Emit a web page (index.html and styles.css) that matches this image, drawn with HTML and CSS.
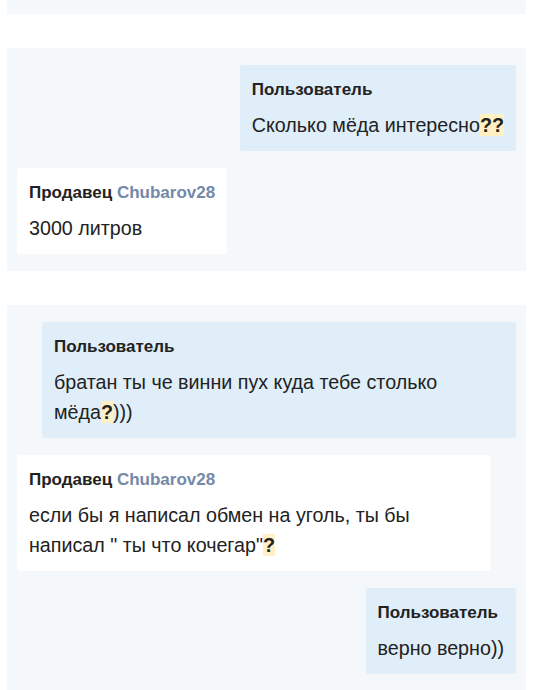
FILE: index.html
```html
<!DOCTYPE html>
<html lang="ru">
<head>
    <meta charset="UTF-8">
    <meta name="viewport" content="width=device-width, initial-scale=1.0">
    <title>Переписка</title>
    <link rel="stylesheet" href="styles.css">
</head>
<body>
    <div class="dialog dialog-cut"></div>

    <div class="dialog">
        <div class="msg msg-user">
            <div class="msg-head">Пользователь</div>
            <div class="msg-text">Сколько мёда интересно<b class="mark">??</b></div>
        </div>
        <div class="msg msg-seller">
            <div class="msg-head">Продавец <span class="nick">Chubarov28</span></div>
            <div class="msg-text">3000 литров</div>
        </div>
    </div>

    <div class="dialog">
        <div class="msg msg-user">
            <div class="msg-head">Пользователь</div>
            <div class="msg-text">братан ты че винни пух куда тебе столько мёда<b class="mark">?</b>)))</div>
        </div>
        <div class="msg msg-seller">
            <div class="msg-head">Продавец <span class="nick">Chubarov28</span></div>
            <div class="msg-text">если бы я написал обмен на уголь, ты бы написал " ты что кочегар"<b class="mark">?</b></div>
        </div>
        <div class="msg msg-user">
            <div class="msg-head">Пользователь</div>
            <div class="msg-text">верно верно))</div>
        </div>
    </div>
</body>
</html>
```

FILE: styles.css
```css
html,
body {
    margin: 0;
    padding: 0;
}
body {
    background-color: #fff;
    font-family: "Liberation Sans", Arial, sans-serif;
    color: #222;
}
.dialog {
    width: 519px;
    box-sizing: border-box;
    margin: 0 0 34px 7px;
    padding: 17px 10px;
    background-color: #f4f8fb;
    display: flex;
    flex-direction: column;
    gap: 17px;
}
.dialog-cut {
    height: 14px;
    padding: 0;
}
.msg {
    max-width: 95%;
    box-sizing: border-box;
    padding: 10px 12px 11px;
    border-radius: 3px;
}
.msg-user {
    align-self: flex-end;
    background-color: #dfeef8;
}
.msg-seller {
    align-self: flex-start;
    background-color: #fff;
}
.msg-head {
    font-size: 17px;
    font-weight: bold;
    line-height: 30px;
    margin-bottom: 5px;
}
.nick {
    color: #7489a8;
}
.msg-text {
    font-size: 19.7px;
    line-height: 30px;
}
.mark {
    background-color: #fff1c4;
    line-height: 1;
}
```
